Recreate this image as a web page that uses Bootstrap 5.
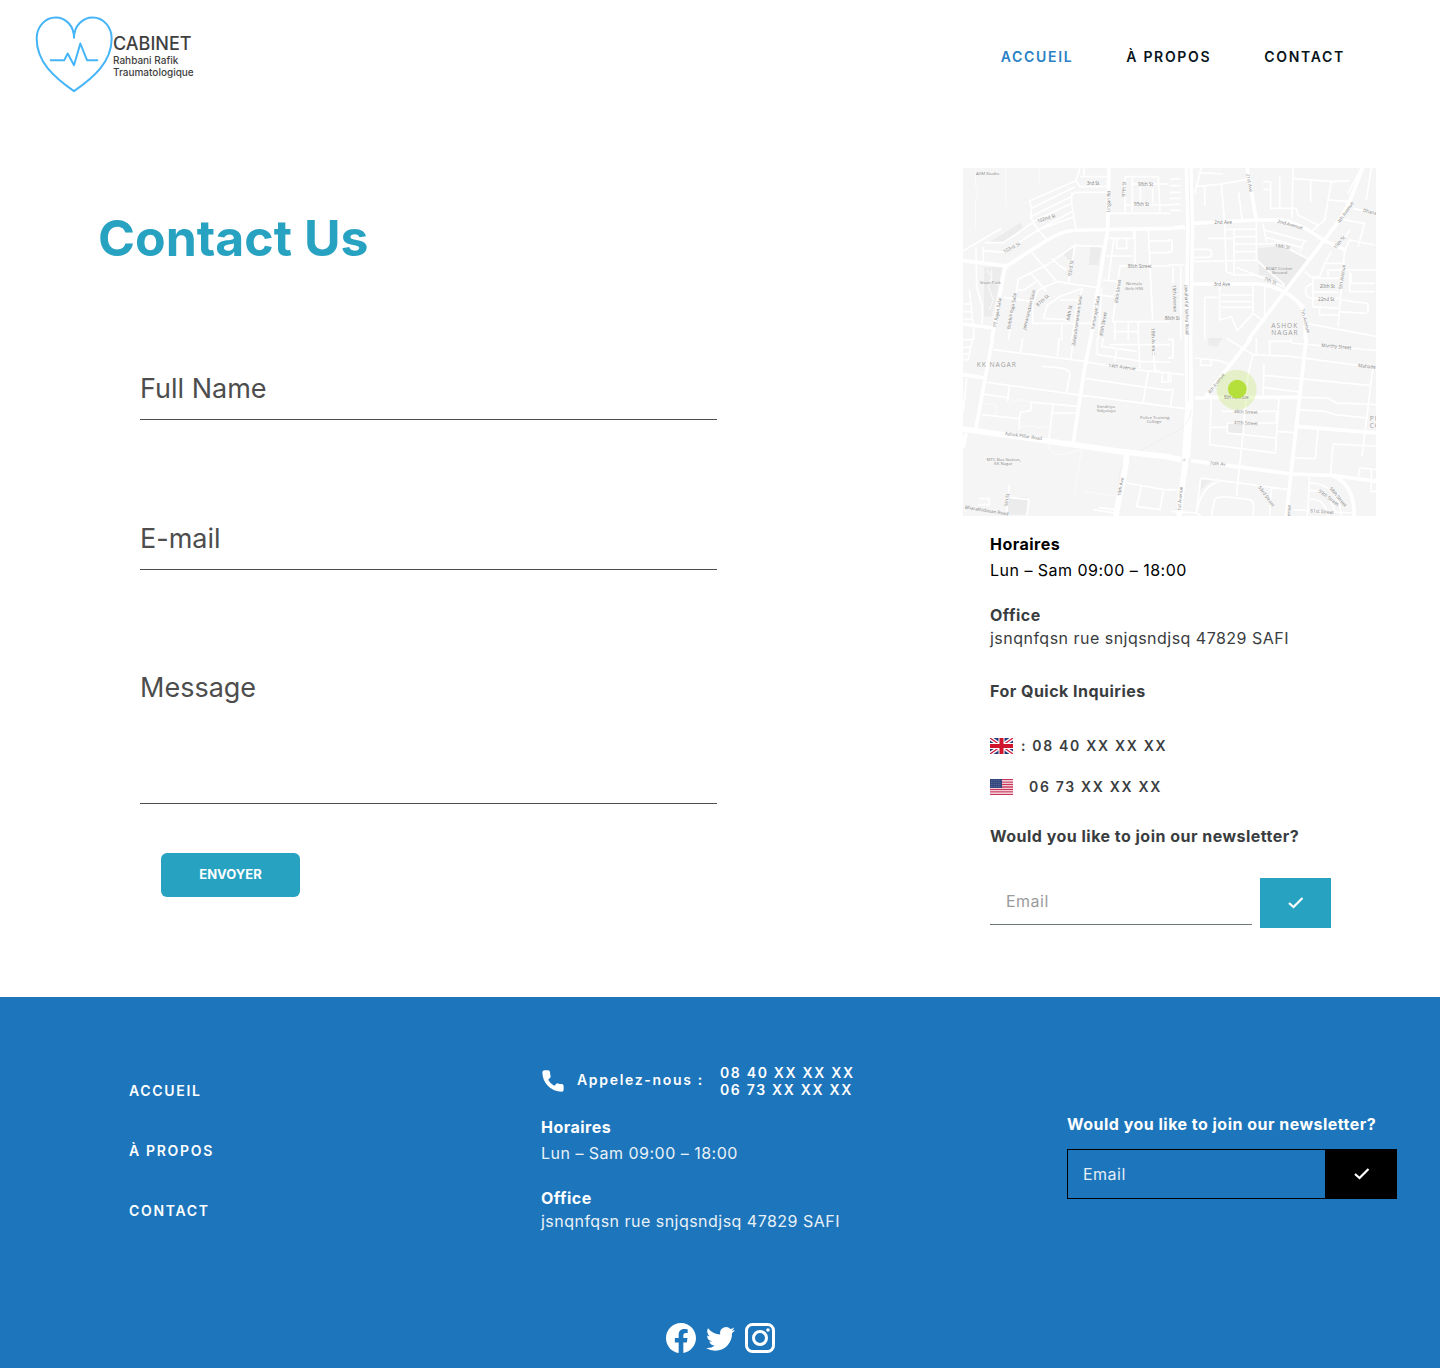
<!DOCTYPE html>
<html lang="fr">
<head>
<meta charset="utf-8">
<meta name="viewport" content="width=device-width, initial-scale=1">
<title>Cabinet Rahbani Rafik – Contact</title>
<link href="https://cdn.jsdelivr.net/npm/bootstrap@5.3.0/dist/css/bootstrap.min.css" rel="stylesheet">
<style>
  :root { --teal: #27a2c1; --blue: #1d75bb; --ink: #3a3d40; }
  body { font-family: Inter, "Open Sans", sans-serif; font-size: 16px; color: var(--ink); letter-spacing: .03em; }
  .tracked { font-size: 14px; line-height: 17px; font-weight: 600; letter-spacing: .12em; }
  .tracked a { color: #08141c; text-decoration: none; }
  .tracked a.current { color: #2980c4; }

  .site-header { padding: 14px 95px 14px 35px; min-height: 112px; }
  .brand { color: #3f3f3f; text-decoration: none; letter-spacing: 0; margin-top: -4px; }
  .brand svg { width: 78px; height: 77px; }
  .brand-name { font-size: 18px; line-height: 20px; font-weight: 500; }
  .brand-sub { font-size: 10px; line-height: 12px; font-weight: 500; }
  .main-links { gap: 53px; }

  .contact-main { padding: 56px 64px 69px 98px; }
  .contact-main h1 { font-size: 50px; line-height: 60px; font-weight: 700; letter-spacing: 0; color: var(--teal); margin: 40px 0 90px; }
  .contact-form { max-width: 619px; padding-left: 42px; }
  .line-field { font-size: 27px; line-height: 60px; letter-spacing: 0; color: #4d4d4d; padding: 0; border: 0; border-bottom: 1px solid #4d4d4d; border-radius: 0; background: none; }
  .line-field::placeholder { color: #4d4d4d; opacity: 1; }
  input.line-field { height: 62px; margin-bottom: 88px; }
  textarea.line-field { height: 146px; resize: none; display: block; overflow: hidden; }
  .send-btn { margin: 49px 0 0 21px; width: 139px; height: 44px; border-radius: 6px; background: var(--teal); color: #fff; font-size: 13px; font-weight: 700; letter-spacing: 0; padding: 0; }
  .send-btn:hover { background: #208aa5; color: #fff; }

  .side { flex: 0 0 413px; }
  .side-info { padding: 15px 0 0 27px; }
  .city-map { display: block; width: 100%; height: auto; }
  .lh-wide { line-height: 26px; }
  .lh-close { line-height: 23px; }
  .gap-block { margin-top: 21px; }
  .phone-list { gap: 21px; margin-top: 32px; }
  .phone-row { line-height: 20px; height: 20px; }
  .flag { width: 23px; height: 16px; flex: none; }
  .side-news-label { margin-top: 26px; }

  .mail-field { height: 47px; flex: 1 1 0; min-width: 0; padding: 0 16px; border: 0; border-bottom: 1px solid #6f7677; border-radius: 0; background: none; letter-spacing: inherit; }
  .mail-field::placeholder { color: #9b9b9b; opacity: 1; }
  .ok-btn { width: 71px; height: 50px; border: 0; border-radius: 0; padding: 0; background: var(--teal); }
  .ok-btn svg { display: block; margin: 0 auto; }
  .side-mail { max-width: 341px; gap: 8px; margin-top: 29px; }

  .site-footer { background: var(--blue); color: #fff; padding: 67px 0 15px; }
  .site-footer a { color: #fff; }
  .footer-grid { display: grid; grid-template-columns: 412fr 526fr 330px; padding: 0 43px 0 129px; }
  .footer-links { padding-top: 18px; gap: 43px; }
  .footer-news { padding-top: 47px; }
  .footer-news .mail-field { height: 50px; border: 1px solid #000; padding: 0 15px; color: #fff; }
  .footer-news .mail-field::placeholder { color: #e4eef7; }
  .footer-news .ok-btn { background: #000; }
  .soft { color: #e9f1f8; }
  .socials { gap: 10px; margin-top: 90px; }
  .socials svg { display: block; }

  .minor { fill: none; stroke: #fff; stroke-width: 5; stroke-linejoin: round; }
  .faint { fill: none; stroke: #fbfbfb; stroke-width: 3; }
  .hair { fill: none; stroke: #ebebeb; stroke-width: 2; }
  .major { fill: none; stroke: #fff; stroke-width: 11; stroke-linejoin: round; }
  .artery { fill: none; stroke: #fff; stroke-width: 17; stroke-linejoin: round; }
  .trunk { fill: none; stroke: #fff; stroke-width: 24; stroke-linejoin: round; }
  .plot { fill: #ececec; }
  .city-map text { font-family: "Open Sans", sans-serif; font-size: 13px; fill: #8c8c8c; letter-spacing: 0; }
  .city-map .road { font-size: 14px; fill: #808080; }
  .city-map .zone { font-size: 20px; letter-spacing: 3px; fill: #a0a0a0; }

  @media (max-width: 1199px) {
    .site-header, .contact-main, .footer-grid { padding-left: 24px; padding-right: 24px; }
    .contact-form { padding-left: 0; }
    .footer-grid { grid-template-columns: 1fr; gap: 32px; }
    .side { flex-basis: auto; }
  }
</style>
</head>
<body>
<header class="site-header d-flex flex-wrap align-items-center justify-content-between">
  <a class="brand d-flex align-items-center" href="#">
    <svg viewBox="45 48 234 230" fill="none" stroke="#45b5f8" stroke-width="6" stroke-linecap="round" stroke-linejoin="round" aria-hidden="true">
      <path d="M162 113C162 76 189 52 218 52C250 52 275 80 275 115C275 185 222 231 162 273C102 231 50 185 50 115C50 80 75 52 107 52C136 52 162 76 162 113"/>
      <path d="M92 180H133L143 160L162 195L181 130L201 180H232"/>
    </svg>
    <span class="d-block pt-1">
      <span class="brand-name d-block">CABINET</span>
      <span class="brand-sub d-block">Rahbani Rafik</span>
      <span class="brand-sub d-block">Traumatologique</span>
    </span>
  </a>
  <nav class="main-links tracked d-flex">
    <a class="current" href="#">ACCUEIL</a><a href="#">À PROPOS</a><a href="#">CONTACT</a>
  </nav>
</header>

<main class="contact-main d-flex flex-column flex-xl-row justify-content-between">
  <section class="flex-grow-1">
    <h1>Contact Us</h1>
    <form class="contact-form">
      <input class="line-field form-control" type="text" placeholder="Full Name" aria-label="Full Name">
      <input class="line-field form-control" type="email" placeholder="E-mail" aria-label="E-mail">
      <textarea class="line-field form-control" placeholder="Message" aria-label="Message"></textarea>
      <button class="send-btn btn" type="submit">ENVOYER</button>
    </form>
  </section>

  <aside class="side">
    <svg class="city-map" viewBox="0 0 413 348" role="img" aria-label="Plan du quartier">
      <rect width="413" height="348" fill="#f5f5f5"/>
      <!-- north-west -->
      <g transform="translate(-3 -8) scale(.3333)">
        <path class="plot" d="M88 247L182 188L192 206L135 248ZM72 322H125L120 360L95 470H72ZM308 280L340 262V300H325ZM392 258H425L415 315H386Z"/>
        <path class="faint" d="M47 24V80L55 100L47 120V205M137 24V138M238 24V68"/>
        <path class="minor" d="M445 80H360L348 62L208 123L215 145L345 80M215 145L212 170L330 112L345 97H445M360 50H445M348 62L360 24M372 24V45M212 170L218 185L335 130M218 185L235 210L340 152M235 210L262 240M235 210L130 277L72 272M218 188L130 248H75M10 272L125 205M235 210L342 170M335 97V130L348 208M447 160H630M495 50H595L600 155M517 50V155M495 50V158M517 72H625M495 135H630M541 80V130M578 85V130M445 235H522V210M525 210V318M565 210L578 480M440 288H520M462 235L445 360M470 238V265H500V238M565 243H630M568 278H630M480 318H630M480 318L458 485H630M428 360L475 365M215 277L290 365L412 383M262 314L345 256L430 260M345 256L325 370M275 295L300 318L320 330M208 335L260 395M290 365L235 390L218 432V490M168 390H192L228 365M262 314L175 357L168 400L145 540M250 475L262 435L300 410L368 385L355 420H300M250 475L335 480M215 490H390M130 412L220 425M48 262L50 380L67 440V495M70 262V302M10 432H32M10 455H34M10 478H36M28 388L40 500L42 540M425 383L415 540M412 405L460 410M355 420L335 540M465 487V540M535 487V540M505 487V540M460 515H535M305 490V540"/>
        <path class="faint" d="M82 330L95 350L85 380L100 420L88 450M95 330V365L115 375"/>
        <path class="major" d="M10 302L140 318L262 240C310 212 330 210 380 210L630 205M447 24L443 210L410 410L392 540M140 318C125 340 128 370 118 412L95 540M10 492L98 504"/>
        <text x="48" y="46">AVM Studio</text><text class="road" x="380" y="74">3rd St</text><text class="road" x="534" y="77">96th St</text><text class="road" x="522" y="139">95th St</text>
        <text class="road" transform="translate(449 157) rotate(-88)">Lingan Rd</text><text class="road" transform="translate(496 110) rotate(-88)">97th St</text>
        <text class="road" transform="translate(233 188) rotate(-17)">102nd St</text><text class="road" transform="translate(133 280) rotate(-28)">103rd St</text>
        <text x="60" y="371">Sivan Park</text><text class="road" transform="translate(334 348) rotate(-82)">93rd St</text><text class="road" x="503" y="323">86th Street</text><text x="498" y="376">Nirmala</text><text x="495" y="390">Girls HSS</text>
        <text class="road" transform="translate(109 502) rotate(-80)">PT Rajan Salai</text><text class="road" transform="translate(151 508) rotate(-80)">Bobbili Raja Salai</text><text class="road" transform="translate(197 510) rotate(-76)">Jeevanandam Salai</text><text class="road" transform="translate(234 440) rotate(-42)">87th St</text><text class="road" transform="translate(329 482) rotate(-80)">84th St</text><text class="road" transform="translate(345 558) rotate(-82)">Balasubramaniam Salai</text><text class="road" transform="translate(402 508) rotate(-80)">Kamarajar Salai</text><text class="road" transform="translate(428 528) rotate(-80)">85th Street</text><text class="road" transform="translate(473 430) rotate(-82)">80th Street</text><text class="road" x="614" y="480">86th St</text>
        <text class="road" transform="translate(574 505) rotate(88)">18th Avenue</text>
      </g>
      <!-- north-east -->
      <g transform="translate(205 -8) scale(.3333)">
        <path class="plot" d="M268 265L340 258L420 297L358 385L290 345L272 345V300Z"/>
        <path class="minor" d="M5 57H38M5 77H38M5 97H38M5 115H38M5 133H38M5 151H38M5 205H60M0 240H12V275H0M0 315H50M15 320V370M38 320V540M80 100L100 24M85 80L160 72L240 58M90 38L165 42M110 80V138M160 72L170 190L175 335M212 97L222 178M75 268H122C134 270 134 290 122 292H78M78 305L265 300M120 235H195M170 208H265M198 210V345H270M200 230H262M200 252H265M200 275H265M205 322L350 380M285 65H308V145H385L390 165L450 195M285 88H308M335 50V145M375 24L372 175M378 55L490 65L545 62M428 62V125M490 65L470 180L430 215M482 120L540 125M295 245L285 190M290 210L415 245M290 230L405 265M265 252L330 250L420 297M410 240L395 275M265 180V300L350 375M555 145L620 160M580 24L540 100M595 120L610 24M522 178L590 190L570 260M520 250L545 210M530 270L545 240L620 255M530 270L510 500M470 310L530 310M455 350L470 310L490 275M455 350H435V440L510 445M410 335L435 355H515M435 370C405 375 405 415 435 415H512M435 395L512 397M480 350V330H625M545 335V395H620M620 370H550V340M520 420L600 430V460M455 445V465H512M515 455L595 460M110 412H150M110 412V540M155 380V480L190 470L208 512L255 460V380M160 405H255M160 425H255M160 442H255M290 380V470L265 510M255 460L290 485M350 390L410 440M415 490L630 530M175 335L200 345"/>
        <path class="major" d="M0 207L50 200M75 190L265 180H340C385 185 425 210 465 240L535 272M75 372L270 372C320 375 390 410 405 450L412 490V540M238 24L265 180M585 24C560 75 555 125 500 200L350 395L240 540"/>
        <path class="trunk" d="M62 24L67 200L61 540"/><path class="hair" d="M62 24L67 200L61 540"/>
        <text class="road" transform="translate(235 42) rotate(80)">21st Ave</text><text class="road" x="139" y="191">2nd Ave</text><text class="road" transform="translate(328 188) rotate(15)">2nd Avenue</text><text class="road" transform="translate(320 260) rotate(10)">13th St</text><text class="road" transform="translate(515 190) rotate(-55)">4th Avenue</text><text class="road" transform="translate(584 155) rotate(14)">Dhana</text><text class="road" transform="translate(503 268) rotate(-50)">15th St</text>
        <text x="293" y="329">BOAT Cricket</text><text x="311" y="343">Ground</text><text class="road" x="137" y="378">3rd Ave</text><text class="road" transform="translate(288 360) rotate(22)">7th St</text><text class="road" x="455" y="385">20th St</text><text class="road" x="450" y="423">22nd St</text><text class="road" transform="translate(522 388) rotate(-82)">5th Avenue</text>
        <text class="road" transform="translate(14 375) rotate(88)">19th Avenue</text><text class="road" transform="translate(50 375) rotate(89)">Jawaharlal Nehru Road</text><text class="road" transform="translate(398 448) rotate(75)">7th Avenue</text>
        <text class="zone" x="310" y="503">ASHOK</text><text class="zone" x="310" y="526">NAGAR</text>
      </g>
      <!-- south-west -->
      <g transform="translate(-3 170) scale(.3333)">
        <path class="plot" d="M148 478H202V530H140Z"/>
        <path class="minor" d="M100 35L375 70M0 5H35M0 28H30M0 48H28M10 65H25L38 0M188 0L182 42M298 0L292 55M338 20L333 62M75 132L365 172M245 85C300 88 330 90 330 110L320 162M148 145L142 190M70 168L148 180M210 192L352 205M65 230L178 242M178 275V242L182 222L212 218L215 192M280 195L265 315M275 225H350M378 122L630 158M365 172L630 206M378 72L520 95L630 105M565 98L550 192M412 0V50L545 70M430 0L425 25L530 40M450 20H530M470 35L465 70M535 0L540 92M580 40L585 95L608 105L605 132H625V105M530 20H630M542 70L630 72M20 120L10 220M55 482H88V500H55M148 440L140 530M148 478L208 485L200 534M400 515L465 525M415 508L465 515M500 435L630 458M545 442L530 505L600 515L610 460"/>
        <path class="faint" d="M65 195L108 200V230M148 180L165 190L180 184L210 192M178 265H232V270L265 265M265 315C265 345 290 358 330 345L365 335L340 480M370 460L480 475"/><path class="hair" d="M630 290L520 350C480 380 480 400 475 430"/>
        <path class="major" d="M98 0L48 270M10 110L75 120M392 0L375 85L340 312M18 285L10 330"/>
        <path class="artery" d="M500 350C500 400 480 450 468 534M0 272L180 297L480 340L630 357"/>
        <text class="zone" x="50" y="86">KK NAGAR</text><text class="road" transform="translate(445 87) rotate(7)">14th Avenue</text><text x="411" y="210">Kendriya</text><text x="410" y="223">Vidyalaya</text><text x="540" y="243">Police Training</text><text x="560" y="256">College</text><text class="road" transform="translate(134 291) rotate(8)">Ashok Pillar Road</text><text x="80" y="368">MTC Bus Station,</text><text x="102" y="381">KK Nagar</text><text class="road" transform="translate(482 475) rotate(-80)">10th Ave</text><text class="road" transform="translate(143 505) rotate(-82)">5th St</text><text class="road" transform="translate(14 512) rotate(9)">Bharathidasan Road</text>
      </g>
      <!-- south-east -->
      <g transform="translate(205 170) scale(.3333)">
        <path class="plot" d="M120 0H165L145 27L122 22ZM178 255H225V285H178ZM98 425L128 428L98 455Z"/>
        <path class="minor" d="M0 5H15V60H0M80 60L155 68L185 80M98 62V82H130V65M0 105L48 110M0 130H8V110M0 155H15L8 205M0 205L50 212M175 0L255 50L370 55L630 90M265 50V0M300 10H370M305 10V50M370 0V15L630 38M255 50L240 110L225 290L205 475M288 78L285 178M288 112L605 142M288 148L395 162M615 85L582 355M395 178L480 180L505 195L630 200M392 215L470 220L500 230L600 240M130 170L125 320L322 345L333 180M160 220H330M178 255H325V225M178 255V285L322 300M130 268H175M325 280L378 284M450 275L442 362L380 360M630 325L495 318L488 410M570 425L575 390L630 395M610 390V460H630M98 420L365 455M98 420L85 525C95 480 110 440 155 430M0 455H40M10 520L85 525L100 534M130 534L140 485C150 472 170 475 245 485C260 490 258 505 255 534M310 450L305 534M425 415L418 534M425 435C470 435 500 460 515 500L520 534M425 458C460 455 490 480 500 520M425 485C455 480 475 500 480 534M375 515L550 525"/>
        <path class="major" d="M80 180H110L160 115L250 0M110 178H390M415 0L385 265L355 534M385 265L630 285M70 368L370 408L490 412C540 430 560 470 558 534M490 412L630 430"/>
        <path class="trunk" d="M61 0L64 200L54 360"/><path class="artery" d="M0 357L40 365M54 350C52 400 38 450 34 534"/><path class="hair" d="M61 0V190M0 295C40 275 65 255 70 215"/><path d="M43 368L50 360L53 370Z" fill="#ddd"/>
        <text class="road" transform="translate(460 26) rotate(5)">Murthy Street</text><text class="road" transform="translate(570 87) rotate(6)">Mahade</text><text class="road" transform="translate(126 168) rotate(-52)">4th Avenue</text>
        <circle cx="206" cy="155" r="60" fill="#b9e443" fill-opacity=".25"/><text class="road" x="168" y="183">8th Avenue</text><circle cx="208" cy="153" r="28" fill="#b5df3a"/>
        <text class="road" transform="translate(197 225) rotate(2)">48th Street</text><text class="road" transform="translate(197 258) rotate(3)">47th Street</text><text class="road" transform="translate(124 380) rotate(5)">70th Av</text><text class="road" transform="translate(270 448) rotate(54)">53rd Street</text><text class="road" transform="translate(483 452) rotate(50)">58th Street</text><text class="road" transform="translate(450 462) rotate(36)">59th Street</text><text class="road" transform="translate(427 523) rotate(4)">61st Street</text><text class="road" transform="translate(38 518) rotate(-85)">1st Avenue</text><text class="road" transform="translate(366 534) rotate(-86)">enue</text>
        <text class="zone" x="605" y="250">PU</text><text class="zone" x="605" y="271">CO</text>
      </g>
    </svg>

    <div class="side-info">
      <div class="lh-wide text-black"><div class="fw-bold">Horaires</div><div>Lun – Sam 09:00 – 18:00</div></div>
      <div class="lh-close gap-block"><div class="fw-bold">Office</div><div>jsnqnfqsn rue snjqsndjsq 47829 SAFI</div></div>
      <div class="lh-wide fw-bold mt-4 pt-1">For Quick Inquiries</div>
      <div class="phone-list tracked d-flex flex-column">
        <div class="phone-row d-flex align-items-center gap-2">
          <svg class="flag" viewBox="0 0 23 16" aria-label="Royaume-Uni"><rect width="23" height="16" fill="#253a7c"/><path d="M0 0L23 16M23 0L0 16" stroke="#fff" stroke-width="4"/><path d="M0 0L23 16M23 0L0 16" stroke="#cf1b3a" stroke-width="1.3"/><path d="M11.500 0V16M0 8H23" stroke="#fff" stroke-width="6"/><path d="M11.500 0V16M0 8H23" stroke="#cf142b" stroke-width="4"/></svg>
          <span>: 08 40 XX XX XX</span>
        </div>
        <div class="phone-row d-flex align-items-center gap-3">
          <svg class="flag" viewBox="0 0 23 16" aria-label="États-Unis"><rect width="23" height="16" fill="#fff"/><path d="M0 .6H23M0 3.100H23M0 5.500H23M0 8H23M0 10.500H23M0 12.900H23M0 15.400H23" stroke="#c8355a" stroke-width="1.300"/><rect width="12" height="9" fill="#34477e"/><path d="M1 1.500H11M1 3.500H11M1 5.500H11M1 7.500H11" stroke="#7484ab" stroke-width=".7" stroke-dasharray=".7 1"/></svg>
          <span>06 73 XX XX XX</span>
        </div>
      </div>
      <form>
        <label class="side-news-label lh-wide fw-bold d-block" for="side-news">Would you like to join our newsletter?</label>
        <div class="side-mail d-flex">
          <input class="mail-field form-control" id="side-news" type="email" placeholder="Email">
          <button class="ok-btn btn" type="submit" aria-label="Valider"><svg width="16" height="12" viewBox="0 0 16 12" fill="none" stroke="#fff" stroke-width="2.200" aria-hidden="true"><path d="M1 6L5.500 10L14.500 1"/></svg></button>
        </div>
      </form>
    </div>
  </aside>
</main>

<footer class="site-footer">
  <div class="footer-grid">
    <nav class="footer-links tracked d-flex flex-column"><a href="#">ACCUEIL</a><a href="#">À PROPOS</a><a href="#">CONTACT</a></nav>
    <div>
      <div class="tracked d-flex align-items-center">
        <svg width="24" height="24" viewBox="1 1 22 22" fill="#fff" class="me-2" aria-hidden="true"><path d="M6.620 10.790c1.440 2.830 3.760 5.140 6.590 6.590l2.200-2.200c.27-.27.67-.36 1.020-.24 1.120.37 2.330.57 3.570.57.55 0 1 .45 1 1V20c0 .55-.45 1-1 1-9.390 0-17-7.610-17-17 0-.55.45-1 1-1h3.500c.55 0 1 .45 1 1 0 1.250.2 2.450.57 3.570.11.35.03.74-.25 1.020z" stroke="#fff" stroke-width="1.5" stroke-linejoin="round"/></svg>
        <span class="ms-1 me-3 mb-1">Appelez-nous :</span>
        <span>08 40 XX XX XX<br>06 73 XX XX XX</span>
      </div>
      <div class="lh-wide mt-3"><div class="fw-bold">Horaires</div><div class="soft">Lun – Sam 09:00 – 18:00</div></div>
      <div class="lh-close gap-block"><div class="fw-bold">Office</div><div class="soft">jsnqnfqsn rue snjqsndjsq 47829 SAFI</div></div>
    </div>
    <form class="footer-news">
      <label class="lh-wide fw-bold d-block" for="foot-news">Would you like to join our newsletter?</label>
      <div class="d-flex mt-2 pt-1">
        <input class="mail-field form-control" id="foot-news" type="email" placeholder="Email">
        <button class="ok-btn btn" type="submit" aria-label="Valider"><svg width="16" height="12" viewBox="0 0 16 12" fill="none" stroke="#fff" stroke-width="2.200" aria-hidden="true"><path d="M1 6L5.500 10L14.500 1"/></svg></button>
      </div>
    </form>
  </div>
  <div class="socials d-flex justify-content-center">
    <a href="#" aria-label="Facebook"><svg width="30" height="30" viewBox="0 0 16 16" fill="#fff"><path d="M16 8.049c0-4.446-3.582-8.050-8-8.050C3.580 0-.002 3.603-.002 8.050c0 4.017 2.926 7.347 6.750 7.951v-5.625h-2.030V8.050H6.750V6.275c0-2.017 1.195-3.131 3.022-3.131.876 0 1.791.157 1.791.157v1.980h-1.009c-.993 0-1.303.621-1.303 1.258v1.510h2.218l-.354 2.326H9.250V16c3.824-.604 6.750-3.934 6.750-7.951z"/></svg></a>
    <a href="#" aria-label="Twitter"><svg width="29" height="30" viewBox="0 0 16 16" fill="#fff"><path d="M5.026 15c6.038 0 9.341-5.003 9.341-9.334 0-.14 0-.282-.006-.422A6.685 6.685 0 0 0 16 3.542a6.658 6.658 0 0 1-1.889.518 3.301 3.301 0 0 0 1.447-1.817 6.533 6.533 0 0 1-2.087.793A3.286 3.286 0 0 0 7.875 6.030a9.325 9.325 0 0 1-6.767-3.429 3.289 3.289 0 0 0 1.018 4.382A3.323 3.323 0 0 1 .64 6.575v.045a3.288 3.288 0 0 0 2.632 3.218 3.203 3.203 0 0 1-.865.115 3.230 3.230 0 0 1-.614-.057 3.283 3.283 0 0 0 3.067 2.277A6.588 6.588 0 0 1 .780 13.580a6.320 6.320 0 0 1-.780-.045A9.344 9.344 0 0 0 5.026 15z"/></svg></a>
    <a href="#" aria-label="Instagram"><svg width="30" height="30" viewBox="0 0 30 30" fill="none" stroke="#fff" stroke-width="3"><rect x="1.500" y="1.500" width="27" height="27" rx="6"/><circle cx="15" cy="15" r="6.500"/><circle cx="23" cy="7" r="1.800" fill="#fff" stroke="none"/></svg></a>
  </div>
</footer>
<script src="https://cdn.jsdelivr.net/npm/bootstrap@5.3.0/dist/js/bootstrap.bundle.min.js"></script>
</body>
</html>
